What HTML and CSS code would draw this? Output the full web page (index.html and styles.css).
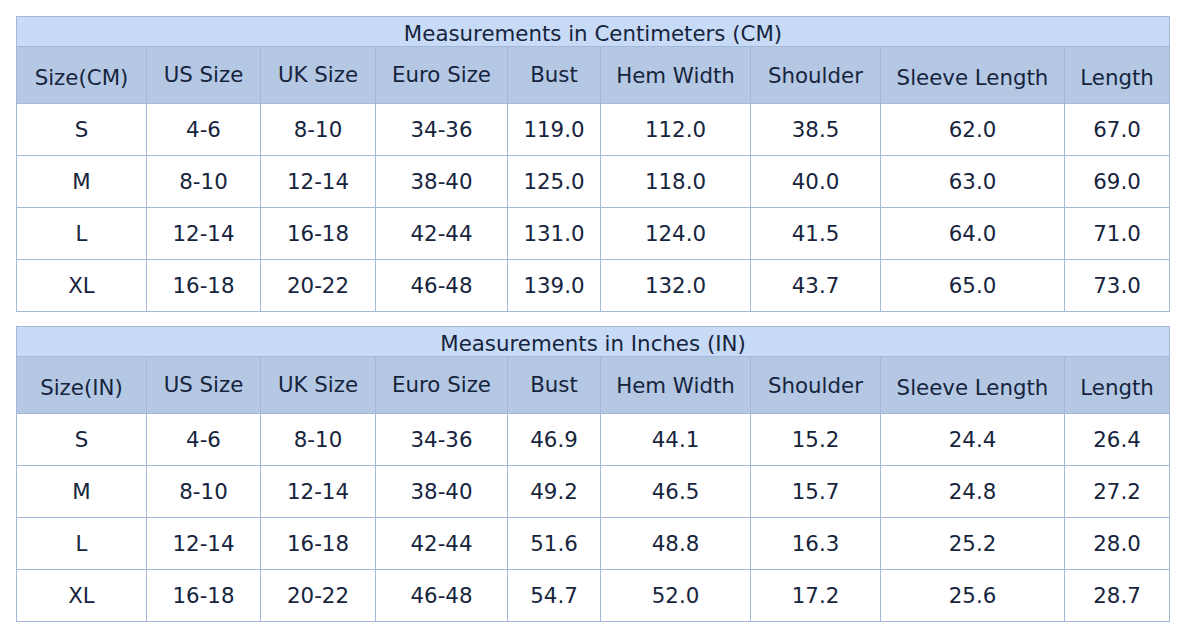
FILE: index.html
```html
<!DOCTYPE html>
<html>
<head>
<meta charset="utf-8">
<link rel="stylesheet" href="styles.css">
</head>
<body>
<div class="page">
<table class="size-table">
  <colgroup>
    <col class="c1"><col class="c2"><col class="c3"><col class="c4"><col class="c5"><col class="c6"><col class="c7"><col class="c8"><col class="c9">
  </colgroup>
  <tr class="title-row"><td colspan="9">Measurements in Centimeters (CM)</td></tr>
  <tr class="head-row">
    <td class="low">Size(CM)</td><td>US Size</td><td>UK Size</td><td>Euro Size</td><td>Bust</td><td class="mid">Hem Width</td><td class="mid">Shoulder</td><td class="low">Sleeve Length</td><td class="low">Length</td>
  </tr>
  <tr><td>S</td><td>4-6</td><td>8-10</td><td>34-36</td><td>119.0</td><td>112.0</td><td>38.5</td><td>62.0</td><td>67.0</td></tr>
  <tr><td>M</td><td>8-10</td><td>12-14</td><td>38-40</td><td>125.0</td><td>118.0</td><td>40.0</td><td>63.0</td><td>69.0</td></tr>
  <tr><td>L</td><td>12-14</td><td>16-18</td><td>42-44</td><td>131.0</td><td>124.0</td><td>41.5</td><td>64.0</td><td>71.0</td></tr>
  <tr><td>XL</td><td>16-18</td><td>20-22</td><td>46-48</td><td>139.0</td><td>132.0</td><td>43.7</td><td>65.0</td><td>73.0</td></tr>
</table>
<table class="size-table">
  <colgroup>
    <col class="c1"><col class="c2"><col class="c3"><col class="c4"><col class="c5"><col class="c6"><col class="c7"><col class="c8"><col class="c9">
  </colgroup>
  <tr class="title-row"><td colspan="9">Measurements in Inches (IN)</td></tr>
  <tr class="head-row">
    <td class="low">Size(IN)</td><td>US Size</td><td>UK Size</td><td>Euro Size</td><td>Bust</td><td class="mid">Hem Width</td><td class="mid">Shoulder</td><td class="low">Sleeve Length</td><td class="low">Length</td>
  </tr>
  <tr><td>S</td><td>4-6</td><td>8-10</td><td>34-36</td><td>46.9</td><td>44.1</td><td>15.2</td><td>24.4</td><td>26.4</td></tr>
  <tr><td>M</td><td>8-10</td><td>12-14</td><td>38-40</td><td>49.2</td><td>46.5</td><td>15.7</td><td>24.8</td><td>27.2</td></tr>
  <tr><td>L</td><td>12-14</td><td>16-18</td><td>42-44</td><td>51.6</td><td>48.8</td><td>16.3</td><td>25.2</td><td>28.0</td></tr>
  <tr><td>XL</td><td>16-18</td><td>20-22</td><td>46-48</td><td>54.7</td><td>52.0</td><td>17.2</td><td>25.6</td><td>28.7</td></tr>
</table>
</div>
</body>
</html>
```

FILE: styles.css
```css
html, body {
  margin: 0;
  padding: 0;
  background: #ffffff;
}
.page {
  padding: 16px 0 0 16px;
  display: flex;
  flex-direction: column;
  gap: 14px;
  font-family: "DejaVu Sans", Verdana, sans-serif;
  color: #16243d;
}
.size-table {
  border-collapse: collapse;
  table-layout: fixed;
  width: 1154px;
  font-size: 16pt;
}
.size-table td {
  border: 1px solid #a3b8d9;
  text-align: center;
  vertical-align: middle;
  padding: 0;
  height: 51px;
  line-height: 24px;
}
.c1 { width: 130px; }
.c2 { width: 114px; }
.c3 { width: 115px; }
.c4 { width: 132px; }
.c5 { width: 93px; }
.c6 { width: 150px; }
.c7 { width: 130px; }
.c8 { width: 184px; }
.c9 { width: 105px; }
.title-row td {
  background: #c8dbf6;
  height: 30px;
  padding-top: 4px;
  box-sizing: border-box;
}
.head-row td {
  background: #b4c8e4;
  height: 57px;
  padding-bottom: 0;
  box-sizing: border-box;
}
.head-row td.low {
  padding-top: 6px;
}
.head-row td.mid {
  padding-top: 1px;
}
```
